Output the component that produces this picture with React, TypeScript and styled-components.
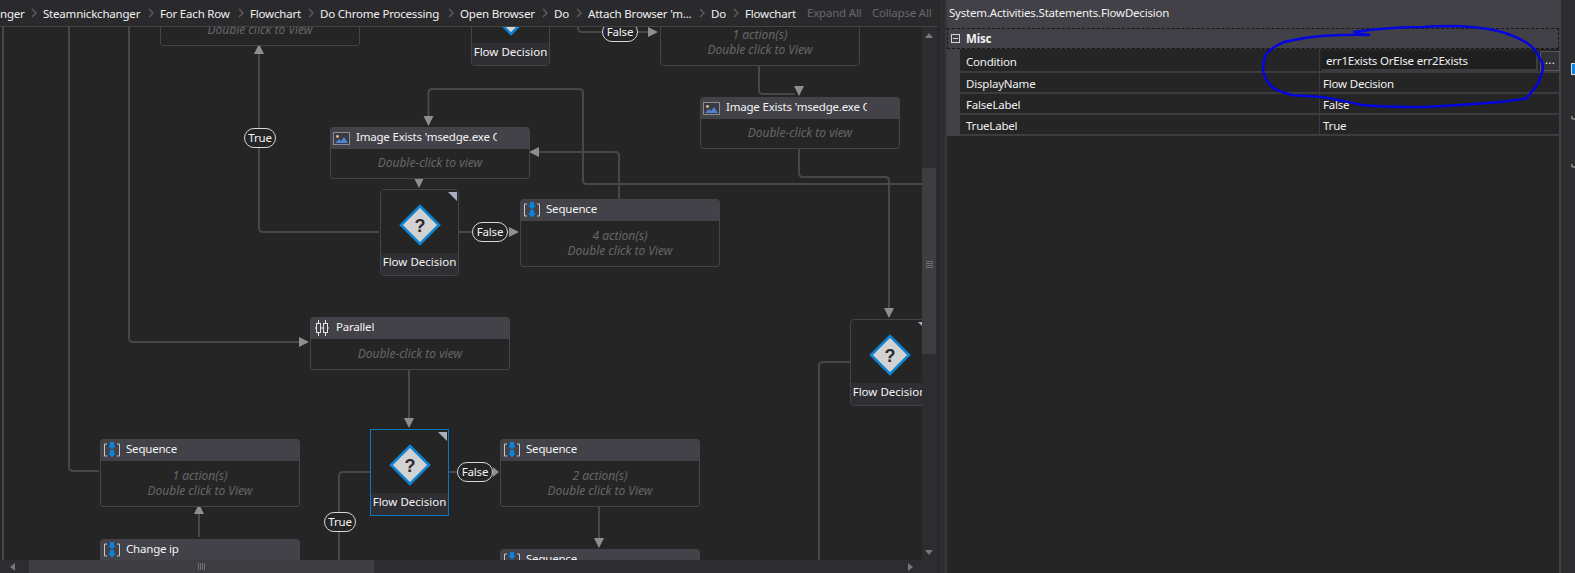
import React from "react";
import styled, { createGlobalStyle } from "styled-components";

const GlobalStyle = createGlobalStyle`
  html, body { margin: 0; padding: 0; background: #2d2d30; overflow: hidden; }
  #root { width: 1575px; height: 573px; }
  * { box-sizing: border-box; }
`;

const FONT = `"Noto Sans", "Open Sans", sans-serif`;

const Page = styled.div`
  position: relative;
  width: 1575px;
  height: 573px;
  display: grid;
  grid-template-columns: 938px 7px 616px 14px;
  font-family: ${FONT};
  font-size: 11.5px;
  letter-spacing: -0.2px;
  color: #f1f1f1;
  overflow: hidden;
`;

const Designer = styled.section`
  display: flex;
  flex-direction: column;
  min-width: 0;
  background: #2d2d30;
`;

const Toolbar = styled.nav`
  height: 27px;
  flex: none;
  display: flex;
  align-items: center;
  border-bottom: 1px solid #434346;
  background: #2a2a2d;
  white-space: nowrap;
  overflow: hidden;
`;

const Crumb = styled.span<{ $w: number }>`
  flex: none;
  width: ${(p) => p.$w}px;
  color: #f1f1f1;
`;

const Chevron = styled.svg`
  flex: none;
  width: 19px;
  height: 10px;
`;

const ToolbarAction = styled.span<{ $w: number }>`
  flex: none;
  width: ${(p) => p.$w}px;
  color: #67676b;
  padding-bottom: 2px;
`;

const Workspace = styled.div`
  flex: 1;
  display: flex;
  min-height: 0;
`;

const Canvas = styled.div`
  position: relative;
  width: 922px;
  flex: none;
  background: #252526;
  overflow: hidden;
`;

const Wires = styled.svg`
  position: absolute;
  left: 0;
  top: 0;
  width: 922px;
  height: 533px;
`;

const ActivityCard = styled.div<{ $x: number; $y: number }>`
  position: absolute;
  left: ${(p) => p.$x}px;
  top: ${(p) => p.$y - 27}px;
  width: 200px;
  background: #252526;
  border: 1px solid #434349;
  border-radius: 3px;
  overflow: hidden;
`;

const CardHeader = styled.div`
  height: 22px;
  margin: -1px -1px 0;
  padding: 0 0 2px 3px;
  display: flex;
  align-items: center;
  gap: 6px;
  background: #424248;
`;

const IconSlot = styled.span`
  flex: none;
  width: 17px;
  height: 17px;
  margin-top: 2px;
  display: flex;
  align-items: center;
  justify-content: center;
`;

const CardTitle = styled.span`
  max-width: 141px;
  overflow: hidden;
  white-space: nowrap;
  color: #f4f4f4;
  line-height: 16px;
`;

const CardBody = styled.div<{ $h: number }>`
  height: ${(p) => p.$h}px;
  padding-bottom: 2px;
  display: flex;
  flex-direction: column;
  align-items: center;
  justify-content: center;
  font-size: 12px;
  letter-spacing: 0;
  font-style: italic;
  line-height: 15px;
  color: #666668;
`;

const Decision = styled.div<{ $x: number; $y: number; $selected?: boolean }>`
  position: absolute;
  left: ${(p) => p.$x}px;
  top: ${(p) => p.$y - 27}px;
  width: 79px;
  height: 87px;
  display: flex;
  flex-direction: column;
  background: #252526;
  border: 1px solid ${(p) => (p.$selected ? "#0d76bd" : "#434349")};
  border-radius: ${(p) => (p.$selected ? "0" : "4px")};
  overflow: hidden;
`;

const DecisionCorner = styled.svg`
  position: absolute;
  right: 1px;
  top: 2px;
  width: 9px;
  height: 9px;
`;

const DecisionIconWrap = styled.div`
  flex: 1;
  display: flex;
  align-items: center;
  justify-content: center;
  padding-top: 7px;
`;

const DecisionLabel = styled.div`
  height: 22px;
  flex: none;
  background: #2f2f33;
  text-align: center;
  line-height: 18px;
  letter-spacing: 0;
  white-space: nowrap;
  color: #f4f4f4;
`;

const EdgeLabel = styled.span<{ $x: number; $y: number; $w: number }>`
  position: absolute;
  left: ${(p) => p.$x}px;
  top: ${(p) => p.$y - 27}px;
  width: ${(p) => p.$w}px;
  height: 20px;
  border: 1px solid #d8d8d8;
  border-radius: 10px;
  background: #252526;
  color: #f4f4f4;
  text-align: center;
  line-height: 17px;
`;

const VScroll = styled.div`
  width: 16px;
  flex: none;
  display: flex;
  flex-direction: column;
  background: #2d2d30;
  border-right: 2px solid #2a2a2c;
`;

const ScrollButton = styled.div<{ $size: number }>`
  flex: none;
  height: ${(p) => p.$size}px;
  display: flex;
  align-items: center;
  justify-content: center;
`;

const VSpacer = styled.div<{ $grow?: boolean; $h?: number }>`
  flex: ${(p) => (p.$grow ? 1 : "none")};
  height: ${(p) => (p.$h ? `${p.$h}px` : "auto")};
`;

const VThumb = styled.div`
  flex: none;
  height: 186px;
  background: #3e3e42;
  display: flex;
  align-items: flex-end;
  justify-content: center;
  padding-bottom: 86px;
`;

const VGrip = styled.div`
  width: 7px;
  height: 7px;
  background: repeating-linear-gradient(to bottom, #6f6f73 0 1px, transparent 1px 2px);
`;

const HScroll = styled.div`
  height: 13px;
  flex: none;
  display: flex;
  align-items: center;
  background: #2d2d30;
  padding-left: 4px;
`;

const HArrow = styled.div<{ $w: number }>`
  flex: none;
  width: ${(p) => p.$w}px;
  height: 13px;
  display: flex;
  align-items: center;
  justify-content: center;
`;

const HThumb = styled.div`
  flex: none;
  margin-left: 9px;
  width: 345px;
  height: 13px;
  background: #3e3e42;
  display: flex;
  align-items: center;
  justify-content: center;
`;

const HGrip = styled.div`
  width: 8px;
  height: 7px;
  background: repeating-linear-gradient(to right, #6f6f73 0 1px, transparent 1px 2px);
`;

const HFill = styled.div`
  flex: 1;
`;

const Splitter = styled.div`
  background: #2d2d30;
  border-left: 1px solid #252526;
`;

const Properties = styled.aside`
  display: flex;
  flex-direction: column;
  background: #252526;
  border-left: 2px solid #38383c;
  border-right: 2px solid #414147;
`;

const PropTitle = styled.div`
  height: 28px;
  flex: none;
  padding-left: 2px;
  background: #414147;
  color: #f1f1f1;
  line-height: 26px;
  white-space: nowrap;
`;

const CategoryRow = styled.div`
  height: 21px;
  flex: none;
  display: flex;
  align-items: center;
  gap: 6px;
  padding-left: 3px;
  background: #414147;
  border: 1px dashed #17171a;
  font-weight: 700;
  color: #f1f1f1;
`;

const MinusBox = styled.span`
  width: 9px;
  height: 9px;
  flex: none;
  border: 1px solid #d8d8d8;
  position: relative;
  &::after {
    content: "";
    position: absolute;
    left: 1px;
    right: 1px;
    top: 3px;
    height: 1px;
    background: #d8d8d8;
  }
`;

const PropRows = styled.div`
  display: grid;
  grid-template-columns: 360px 1fr;
  border-left: 13px solid #414147;
`;

const NameCell = styled.div<{ $h: number }>`
  height: ${(p) => p.$h}px;
  padding: 2px 0 0 6px;
  display: flex;
  align-items: center;
  border-bottom: 2px solid #3c3c40;
  border-right: 1px solid #3c3c40;
  color: #f1f1f1;
`;

const ValueCell = styled.div<{ $h: number }>`
  height: ${(p) => p.$h}px;
  padding: 2px 0 0 3px;
  display: flex;
  align-items: center;
  border-bottom: 2px solid #3c3c40;
  color: #f1f1f1;
`;

const ConditionCell = styled.div`
  height: 24px;
  padding: 2px 1px 0 2px;
  display: flex;
  gap: 2px;
  border-bottom: 2px solid #3c3c40;
`;

const ConditionInput = styled.div`
  width: 216px;
  height: 20px;
  padding-left: 4px;
  background: #1f1f20;
  border-right: 2px solid #3c3c40;
  border-bottom: 2px solid #3c3c40;
  line-height: 19px;
  color: #f1f1f1;
`;

const EllipsisButton = styled.div`
  width: 20px;
  height: 20px;
  background: #333337;
  border: 1px solid #55555a;
  color: #f1f1f1;
  letter-spacing: 0.3px;
  text-align: center;
  line-height: 16px;
`;

const RightStrip = styled.div`
  background: #2d2d30;
  display: flex;
  flex-direction: column;
  align-items: flex-end;
  padding-top: 63px;
`;

const Ink = styled.svg`
  position: absolute;
  left: 0;
  top: 0;
  width: 1575px;
  height: 573px;
  pointer-events: none;
`;

const SequenceIcon = () => (
  <svg width="16" height="16" viewBox="0 0 16 16">
    <path d="M3 2H0.5V14H3M13 2H15.5V14H13" fill="none" stroke="#c9c9c9" strokeWidth="1" />
    <path d="M6 0H10V3.5H12L8 7.5L4 3.5H6Z" fill="#0a84e0" />
    <path d="M6 8H10V11.5H12L8 15.5L4 11.5H6Z" fill="#0a84e0" />
  </svg>
);

const ImageIcon = () => (
  <svg width="17" height="13" viewBox="0 0 17 13">
    <rect x="0.5" y="0.5" width="16" height="12" fill="#3a3a44" stroke="#8c8c90" />
    <circle cx="4.5" cy="4.5" r="1.4" fill="#d8c27a" />
    <path d="M2 11L6 7L8 9L11 5L15 11Z" fill="#4f82cf" />
  </svg>
);

const ParallelIcon = () => (
  <svg width="14" height="16" viewBox="0 0 14 16">
    <g fill="none" stroke="#e4e4e4" strokeWidth="1">
      <rect x="1.5" y="3.5" width="4" height="9" />
      <rect x="8.5" y="3.5" width="4" height="9" />
      <path d="M3.5 0V3M3.5 13V16M10.5 0V3M10.5 13V16M1.5 8H0M12.5 8H14M5.5 8H8.5" />
    </g>
  </svg>
);

const DiamondIcon = () => (
  <svg width="42" height="42" viewBox="0 0 42 42">
    <path d="M21 2L40 21L21 40L2 21Z" fill="#d2d2d2" stroke="#0e82d0" strokeWidth="2.6" />
    <text x="21" y="27.5" textAnchor="middle" fontFamily="Liberation Sans, sans-serif" fontSize="18" fontWeight="700" fill="#2a2a2d">?</text>
  </svg>
);

type CardData = { x: number; y: number; title: string; icon: "seq" | "img" | "par"; lines: string[]; h: number };

const cards: CardData[] = [
  { x: 160, y: -22, title: "Sequence", icon: "seq", lines: ["1 action(s)", "Double click to View"], h: 45 },
  { x: 660, y: -2, title: "Sequence", icon: "seq", lines: ["1 action(s)", "Double click to View"], h: 45 },
  { x: 330, y: 127, title: "Image Exists 'msedge.exe Chrome", icon: "img", lines: ["Double-click to view"], h: 29 },
  { x: 700, y: 97, title: "Image Exists 'msedge.exe Chrome", icon: "img", lines: ["Double-click to view"], h: 29 },
  { x: 520, y: 199, title: "Sequence", icon: "seq", lines: ["4 action(s)", "Double click to View"], h: 45 },
  { x: 310, y: 317, title: "Parallel", icon: "par", lines: ["Double-click to view"], h: 30 },
  { x: 100, y: 439, title: "Sequence", icon: "seq", lines: ["1 action(s)", "Double click to View"], h: 45 },
  { x: 500, y: 439, title: "Sequence", icon: "seq", lines: ["2 action(s)", "Double click to View"], h: 45 },
  { x: 100, y: 539, title: "Change ip", icon: "seq", lines: ["1 action(s)", "Double click to View"], h: 45 },
  { x: 500, y: 549, title: "Sequence", icon: "seq", lines: ["1 action(s)", "Double click to View"], h: 45 },
];

const decisions = [
  { x: 471, y: -21 },
  { x: 380, y: 189 },
  { x: 370, y: 429, selected: true },
  { x: 850, y: 319 },
];

const edgeLabels = [
  { x: 244, y: 128, w: 32, text: "True" },
  { x: 472, y: 222, w: 36, text: "False" },
  { x: 602, y: 22, w: 36, text: "False" },
  { x: 324, y: 512, w: 32, text: "True" },
  { x: 457, y: 462, w: 36, text: "False" },
];

const wirePaths = [
  "M3 26V560",
  "M69 26V467Q69 471 73 471H99",
  "M129 26V338Q129 342 133 342H300",
  "M259 54V228Q259 232 263 232H379",
  "M458 232H472M508 232H510",
  "M428.5 117V93Q428.5 89 432.5 89H579Q583 89 583 93V180Q583 184 587 184H922",
  "M619 199V156Q619 152 615 152H538",
  "M578 26V28Q578 32 582 32H650",
  "M759 64V90Q759 94 763 94H795",
  "M799 147V173Q799 177 803 177H885Q889 177 889 181V309",
  "M409 368V419",
  "M199 537V514",
  "M370 472H343Q339 472 339 476V560",
  "M449 472H457",
  "M599 505V539",
  "M850 362H823Q819 362 819 366V560",
];

const arrowHeads = [
  "299,337 309,342 299,347",
  "254,54 259,44 264,54",
  "509,227 519,232 509,237",
  "423.5,116 433.5,116 428.5,126",
  "539,147 529,152 539,157",
  "414,178 424,178 419,188",
  "648,27 658,32 648,37",
  "794,86 804,86 799,96",
  "884,308 894,308 889,318",
  "404,418 414,418 409,428",
  "194,514 204,514 199,504",
  "493,467 499,472 493,477",
  "594,538 604,538 599,548",
];

const crumbs: [string, number][] = [
  ["nger", 24],
  ["Steamnickchanger", 98],
  ["For Each Row", 71],
  ["Flowchart", 51],
  ["Do Chrome Processing", 121],
  ["Open Browser", 75],
  ["Do", 15],
  ["Attach Browser 'm...", 104],
  ["Do", 15],
  ["Flowchart", 51],
];

const props = [
  { name: "DisplayName", value: "Flow Decision", h: 21 },
  { name: "FalseLabel", value: "False", h: 21 },
  { name: "TrueLabel", value: "True", h: 21 },
];

const icons = { seq: <SequenceIcon />, img: <ImageIcon />, par: <ParallelIcon /> };

export default function App() {
  return (
    <Page>
      <GlobalStyle />
      <Designer>
        <Toolbar>
          {crumbs.map(([text, w], i) => (
            <React.Fragment key={i}>
              {i > 0 && (
                <Chevron viewBox="0 0 19 10">
                  <path d="M8 1L12 5L8 9" fill="none" stroke="#5a5a5e" strokeWidth="1.5" />
                </Chevron>
              )}
              <Crumb $w={w}>{text}</Crumb>
            </React.Fragment>
          ))}
          <ToolbarAction $w={11} />
          <ToolbarAction $w={65}>Expand All</ToolbarAction>
          <ToolbarAction $w={62}>Collapse All</ToolbarAction>
        </Toolbar>
        <Workspace>
          <Canvas>
            <Wires viewBox="0 27 922 533">
              <g fill="none" stroke="#47474c" strokeWidth="2">
                {wirePaths.map((d, i) => (
                  <path key={i} d={d} />
                ))}
              </g>
              <g fill="#8f8f8f">
                {arrowHeads.map((p, i) => (
                  <polygon key={i} points={p} />
                ))}
              </g>
            </Wires>
            {cards.map((c, i) => (
              <ActivityCard key={i} $x={c.x} $y={c.y}>
                <CardHeader>
                  <IconSlot>{icons[c.icon]}</IconSlot>
                  <CardTitle>{c.title}</CardTitle>
                </CardHeader>
                <CardBody $h={c.h}>
                  {c.lines.map((l) => (
                    <span key={l}>{l}</span>
                  ))}
                </CardBody>
              </ActivityCard>
            ))}
            {decisions.map((d, i) => (
              <Decision key={i} $x={d.x} $y={d.y} $selected={d.selected}>
                <DecisionCorner viewBox="0 0 9 9">
                  <polygon points="0,0 9,0 9,9" fill="#aab0bf" />
                </DecisionCorner>
                <DecisionIconWrap>
                  <DiamondIcon />
                </DecisionIconWrap>
                <DecisionLabel>Flow Decision</DecisionLabel>
              </Decision>
            ))}
            {edgeLabels.map((l, i) => (
              <EdgeLabel key={i} $x={l.x} $y={l.y} $w={l.w}>
                {l.text}
              </EdgeLabel>
            ))}
          </Canvas>
          <VScroll>
            <ScrollButton $size={17}>
              <svg width="8" height="5" viewBox="0 0 8 5">
                <polygon points="0,5 4,0 8,5" fill="#77777b" />
              </svg>
            </ScrollButton>
            <VSpacer $h={124} />
            <VThumb>
              <VGrip />
            </VThumb>
            <VSpacer $grow />
            <ScrollButton $size={15}>
              <svg width="8" height="5" viewBox="0 0 8 5">
                <polygon points="0,0 8,0 4,5" fill="#77777b" />
              </svg>
            </ScrollButton>
          </VScroll>
        </Workspace>
        <HScroll>
          <HArrow $w={16}>
            <svg width="5" height="8" viewBox="0 0 5 8">
              <polygon points="5,0 5,8 0,4" fill="#77777b" />
            </svg>
          </HArrow>
          <HThumb>
            <HGrip />
          </HThumb>
          <HFill />
          <HArrow $w={17}>
            <svg width="5" height="8" viewBox="0 0 5 8">
              <polygon points="0,0 0,8 5,4" fill="#77777b" />
            </svg>
          </HArrow>
          <HArrow $w={19} />
        </HScroll>
      </Designer>
      <Splitter />
      <Properties>
        <PropTitle>System.Activities.Statements.FlowDecision</PropTitle>
        <CategoryRow>
          <MinusBox />
          Misc
        </CategoryRow>
        <PropRows>
          <NameCell $h={24}>Condition</NameCell>
          <ConditionCell>
            <ConditionInput>err1Exists OrElse err2Exists</ConditionInput>
            <EllipsisButton>...</EllipsisButton>
          </ConditionCell>
          {props.map((p) => (
            <React.Fragment key={p.name}>
              <NameCell $h={p.h}>{p.name}</NameCell>
              <ValueCell $h={p.h}>{p.value}</ValueCell>
            </React.Fragment>
          ))}
        </PropRows>
      </Properties>
      <RightStrip>
        <svg width="4" height="110" viewBox="0 0 4 110">
          <rect x="0.5" y="0.5" width="5" height="11" fill="#0e86e8" stroke="#d8d8d8" />
          <path d="M1 53V56H4M1 101V104H4" fill="none" stroke="#b8b8b8" strokeWidth="1" />
        </svg>
      </RightStrip>
      <Ink viewBox="0 0 1575 573">
        <path
          d="M1370 35C1364 34 1358 34 1354 32C1375 29 1400 27 1424 27C1437 26 1447 26 1457 26C1472 27 1486 28 1498 31C1510 34 1519 38 1527 43C1533 47 1537 52 1539 57C1542 61 1543 64 1543 68C1542 74 1540 79 1537 85C1534 90 1530 93 1527 98C1515 101 1500 102 1486 103C1465 105 1445 106 1424 107C1403 107 1382 107 1362 105C1348 102 1335 99 1321 97C1311 96 1301 96 1292 95C1284 93 1277 91 1272 87C1267 82 1264 76 1263 70C1263 64 1264 58 1267 53C1271 48 1277 45 1284 42C1296 39 1308 37 1321 36C1337 35 1354 34 1370 35"
          fill="none"
          stroke="#0505e0"
          strokeWidth="2.5"
          strokeLinejoin="round"
        />
      </Ink>
    </Page>
  );
}
